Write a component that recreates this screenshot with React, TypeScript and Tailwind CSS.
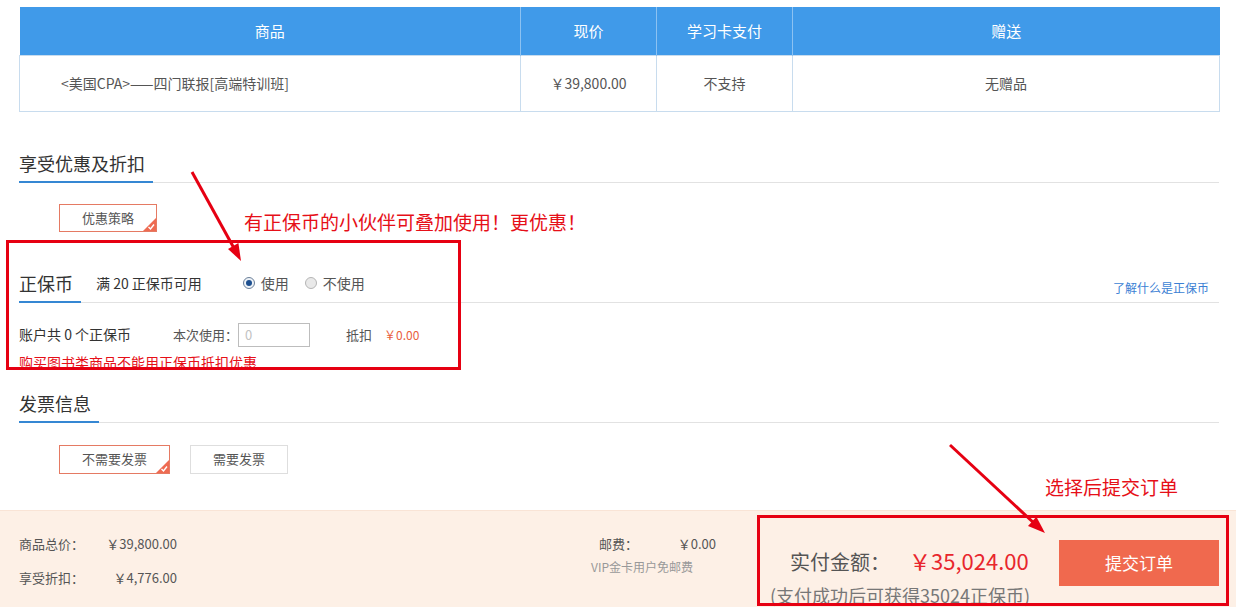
import React from 'react';

const FONT = { fontFamily: '"Noto Sans CJK SC", "Noto Sans", sans-serif' };

const CornerCheck = () => (
  <svg className="absolute right-0 bottom-0" width="13" height="13" viewBox="0 0 13 13">
    <polygon points="13,0 13,13 0,13" fill="#ee6b52" />
    <polyline points="5.5,9 7.5,11 11,6.5" fill="none" stroke="#fff" strokeWidth="1.4" />
  </svg>
);

const OptionButton = ({ label, selected, tall }: { label: string; selected?: boolean; tall?: boolean }) => (
  <div
    className={`relative ${tall ? 'h-[29px]' : 'h-[28px]'} px-[22px] flex items-center text-[13px] text-[#555] bg-white border ${
      selected ? 'border-[#e57a63]' : 'border-[#dedede]'
    }`}
  >
    {label}
    {selected && <CornerCheck />}
  </div>
);

const SectionHeading = ({ title, width, children }: { title: string; width: string; children?: React.ReactNode }) => (
  <div className="flex border-b border-[#e2e2e2]">
    <div className={`${width} text-[18px] leading-[24px] pb-[6px] text-[#333] border-b-2 border-[#3587d3] -mb-px`}>
      {title}
    </div>
    {children}
  </div>
);

const Radio = ({ checked }: { checked?: boolean }) => (
  <span
    className={`w-[12px] h-[12px] rounded-full border flex items-center justify-center ${
      checked ? 'border-[#6b7f99] bg-[#eef3f8]' : 'border-[#b5b5b5] bg-[#e9e9e9]'
    }`}
  >
    {checked && <span className="w-[6px] h-[6px] rounded-full bg-[#1d4f8f]" />}
  </span>
);

export default function App() {
  return (
    <div className="relative w-[1236px] min-h-[607px] bg-white overflow-hidden" style={FONT}>
      <div className="pt-[7px] pl-[19px] w-[1219px]">
        {/* product table */}
        <table className="w-[1200px] table-fixed border-collapse">
          <colgroup>
            <col className="w-[501px]" />
            <col className="w-[136px]" />
            <col className="w-[136px]" />
            <col className="w-[427px]" />
          </colgroup>
          <thead>
            <tr className="h-[48px] bg-[#409ae9] text-white text-[15px]">
              <th className="font-normal border-r border-[#8cc2f2]">商品</th>
              <th className="font-normal border-r border-[#8cc2f2]">现价</th>
              <th className="font-normal border-r border-[#8cc2f2]">学习卡支付</th>
              <th className="font-normal">赠送</th>
            </tr>
          </thead>
          <tbody>
            <tr className="h-[56px] text-[14px] text-[#555]">
              <td className="border border-[#c8dcee] pl-[41px]">&lt;美国CPA&gt;——四门联报[高端特训班]</td>
              <td className="border border-[#c8dcee] text-center">￥39,800.00</td>
              <td className="border border-[#c8dcee] text-center">不支持</td>
              <td className="border border-[#c8dcee] text-center">无赠品</td>
            </tr>
          </tbody>
        </table>

        {/* discounts */}
        <div className="mt-[39px]">
          <SectionHeading title="享受优惠及折扣" width="w-[134px]" />
        </div>
        <div className="mt-[21px] pl-[40px] flex">
          <OptionButton label="优惠策略" selected />
        </div>

        {/* coins */}
        <div className="mt-[39px]">
          <SectionHeading title="正保币" width="w-[62px]">
            <div className="flex items-center pb-[6px] pl-[15px] text-[14px] text-[#333]">
              <span>满 20 正保币可用</span>
              <label className="flex items-center gap-[6px] ml-[41px] text-[#555]">
                <Radio checked />
                使用
              </label>
              <label className="flex items-center gap-[6px] ml-[16px] text-[#555]">
                <Radio />
                不使用
              </label>
            </div>
            <a className="ml-auto self-end pb-[5px] mr-[10px] text-[12px] text-[#3b7fd4]">了解什么是正保币</a>
          </SectionHeading>
        </div>
        <div className="mt-[20px] h-[24px] flex items-center text-[#333]">
          <span className="text-[14px] w-[154px]">账户共 0 个正保币</span>
          <span className="text-[13px] text-[#555]">本次使用：</span>
          <div className="w-[72px] h-[24px] border border-[#bdbdbd] flex items-center pl-[6px] text-[13px] text-[#c2c2c2]">
            0
          </div>
          <span className="ml-[36px] text-[13px] text-[#555]">抵扣</span>
          <span className="ml-[12px] text-[12px] text-[#e9603e]">￥0.00</span>
        </div>
        <div className="mt-[5px] h-[15px] overflow-hidden text-[14px] leading-[20px] text-[#e60f18]">
          购买图书类商品不能用正保币抵扣优惠
        </div>

        {/* invoice */}
        <div className="mt-[24px]">
          <SectionHeading title="发票信息" width="w-[80px]" />
        </div>
        <div className="mt-[22px] pl-[40px] flex gap-[20px]">
          <OptionButton label="不需要发票" selected tall />
          <OptionButton label="需要发票" tall />
        </div>
      </div>

      {/* footer */}
      <div className="mt-[36px] h-[100px] bg-[#fdf0e6] border-t border-[#f9e4d6] flex pl-[19px] text-[#555]">
        <div className="w-[572px] pt-[23px] text-[13px]">
          <div className="flex leading-[20px]">
            <span className="w-[84px]">商品总价：</span>
            <span className="w-[74px] text-right">￥39,800.00</span>
          </div>
          <div className="flex leading-[20px] mt-[14px]">
            <span className="w-[84px]">享受折扣：</span>
            <span className="w-[74px] text-right">￥4,776.00</span>
          </div>
        </div>
        <div className="w-[126px] pt-[23px]">
          <div className="flex leading-[20px] text-[13px] pl-[8px]">
            <span>邮费：</span>
            <span className="ml-auto pr-[1px]">￥0.00</span>
          </div>
          <div className="text-[12px] leading-[16px] mt-[5px] text-[#999]">VIP金卡用户免邮费</div>
        </div>
        <div className="ml-[53px] flex">
          <div className="w-[289px] pt-[35px]">
            <div className="flex items-baseline pl-[20px] leading-[28px]">
              <span className="text-[20px] text-[#555]">实付金额：</span>
              <span className="ml-[19px] text-[22px] text-[#e8262d]">￥35,024.00</span>
            </div>
            <div className="mt-[8px] text-[18px] leading-[22px] text-[#777] whitespace-nowrap">(支付成功后可获得35024正保币)</div>
          </div>
          <div className="mt-[29px] w-[160px] h-[46px] bg-[#f0694e] text-white text-[17px] flex items-center justify-center">
            提交订单
          </div>
        </div>
      </div>

      {/* annotations */}
      <div className="absolute left-[244px] top-[209px] text-[19px] leading-[26px] text-[#e60f18] whitespace-nowrap">
        有正保币的小伙伴可叠加使用！更优惠！
      </div>
      <div className="absolute left-[1045px] top-[474px] text-[19px] leading-[26px] text-[#e60f18] whitespace-nowrap">
        选择后提交订单
      </div>
      <div className="absolute left-[6px] top-[240px] w-[455px] h-[130px] border-[3px] border-[#e60012]" />
      <div className="absolute left-[757px] top-[515px] w-[472px] h-[91px] border-[3px] border-[#e60012]" />
      <svg className="absolute left-0 top-0 pointer-events-none" width="1236" height="607">
        <line x1="192" y1="172" x2="235" y2="250" stroke="#e60012" strokeWidth="3" />
        <polygon points="241,261 228,249 238.4,243" fill="#e60012" />
        <line x1="950" y1="445" x2="1035" y2="524" stroke="#e60012" strokeWidth="3" />
        <polygon points="1045,533 1028,526 1036.4,516.7" fill="#e60012" />
      </svg>
    </div>
  );
}
